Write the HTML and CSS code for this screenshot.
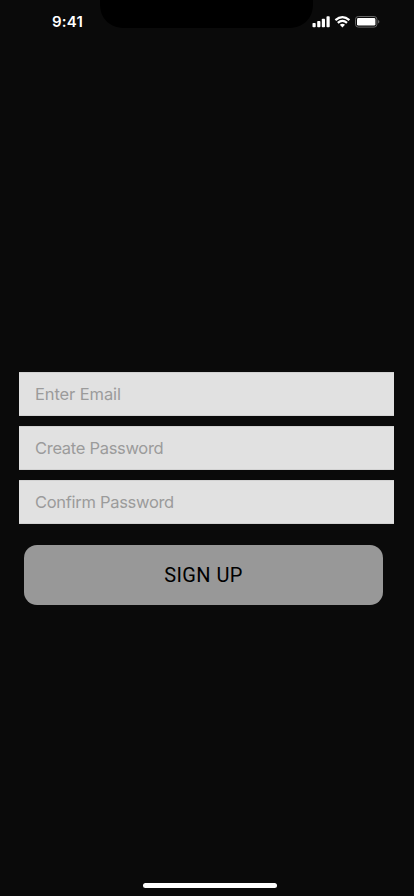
FILE: index.html
```html
<!DOCTYPE html>
<html lang="en">
<head>
<meta charset="utf-8">
<title>Sign Up</title>
<link rel="stylesheet" href="styles.css">
</head>
<body>
<div class="screen">
  <header class="status">
    <span class="time">9:41</span>
    <svg class="notch" viewBox="0 0 221 28" aria-hidden="true"><path d="M4 0H217V4C217 18 208 28 192 28H29C13 28 4 18 4 4Z"/></svg>
    <svg class="indicators" viewBox="0 0 68 14" aria-hidden="true">
      <g fill="#fff">
        <rect x=".5" y="8" width="3.2" height="4.2" rx=".8"/>
        <rect x="5.2" y="6" width="3.2" height="6.2" rx=".8"/>
        <rect x="9.8" y="3.7" width="3.2" height="8.5" rx=".8"/>
        <rect x="14.5" y="1.3" width="3.2" height="10.9" rx=".8"/>
        <path d="M30.4 12.4 27.8 9.8Q30.4 7.7 33 9.8Z"/>
      </g>
      <g fill="none" stroke="#fff" stroke-width="2.2">
        <path d="M23.4 5.1Q30.4-1 37.4 5.1"/>
        <path d="M25.8 7.9Q30.4 3.7 35 7.9"/>
      </g>
      <rect x="43.5" y="1.5" width="21.4" height="10.6" rx="2.8" fill="none" stroke="#666"/>
      <rect x="45" y="3" width="18.4" height="7.6" rx="1.4" fill="#fff"/>
      <path d="M66.1 5Q67.4 5.5 67.4 6.8T66.1 8.6Z" fill="#707070"/>
    </svg>
  </header>
  <form class="form">
    <input class="field email" type="email" placeholder="Enter Email">
    <input class="field" type="password" placeholder="Create Password">
    <input class="field" type="password" placeholder="Confirm Password">
    <button class="submit" type="button">SIGN UP</button>
  </form>
  <div class="home"></div>
</div>
</body>
</html>
```

FILE: styles.css
```css
* { box-sizing: border-box; }
body { margin: 0; background: #0a0a0a; }
.screen {
  width: 414px;
  height: 896px;
  display: flex;
  flex-direction: column;
  overflow: hidden;
  background: #0a0a0a;
}
.status {
  display: grid;
  grid-template-columns: 96px 216px 102px;
  height: 44px;
}
.time {
  padding-left: 52px;
  padding-top: 12px;
  color: #fff;
  font: 600 15px/20px Inter, sans-serif;
  letter-spacing: .2px;
}
.notch { width: 221px; height: 28px; fill: #000; }
.indicators { width: 68px; height: 14px; margin-top: 15px; }
.form {
  display: flex;
  flex-direction: column;
  gap: 10px;
  margin: 328px 20px 0 19px;
}
.field {
  width: 100%;
  height: 44px;
  margin: 0;
  padding: 0 16px;
  border: 1px solid #d2d2d2;
  border-width: 1px 0;
  border-radius: 0;
  background: #e1e1e1;
  color: #222;
  font: 400 16.5px/22px Inter, sans-serif;
  letter-spacing: -.3px;
}
.field::placeholder { color: #9b9b9b; opacity: 1; }
.email { letter-spacing: -.1px; }
.submit {
  height: 60px;
  margin: 11px 11px 0 5px;
  padding: 0;
  border: 0;
  border-radius: 13px;
  background: #989898;
  color: #000;
  font: 400 20px/24px Roboto, sans-serif;
  letter-spacing: .4px;
}
.home {
  width: 134px;
  height: 5px;
  margin: auto 0 8px 143px;
  border-radius: 3px;
  background: #fff;
}
```
